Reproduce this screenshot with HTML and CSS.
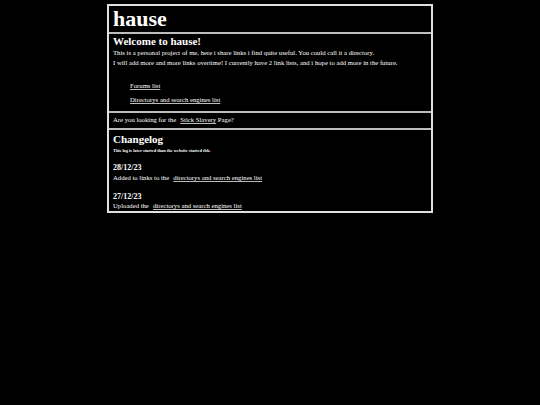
FILE: index.html
```html
<!DOCTYPE html>
<html>
<head>
<meta charset="utf-8">
<title>hause</title>
<link rel="stylesheet" href="styles.css">
</head>
<body>
<div class="page">
  <header class="box title-box">
    <h1 class="title">hause</h1>
  </header>
  <section class="box">
    <h2 class="heading">Welcome to hause!</h2>
    <p class="text">This is a personal project of me, here i share links i find quite useful. You could call it a directory.<br>I will add more and more links overtime! I currently have 2 link lists, and i hope to add more in the future.</p>
    <ul class="links">
      <li><a href="#">Forums list</a></li>
      <li><a href="#">Directorys and search engines list</a></li>
    </ul>
  </section>
  <section class="box ask">
    <p class="text">Are you looking for the <a class="gap" href="#">Stick Slavery</a> Page?</p>
  </section>
  <section class="box log">
    <h2 class="heading">Changelog</h2>
    <p class="tiny">This log is later started than the website started tbh.</p>
    <h3 class="date">28/12/23</h3>
    <p class="text">Added to links to the <a class="gap" href="#">directorys and search engines list</a></p>
    <h3 class="date second">27/12/23</h3>
    <p class="text">Uploaded the <a class="gap" href="#">directorys and search engines list</a></p>
  </section>
</div>
</body>
</html>
```

FILE: styles.css
```css
html, body {
  margin: 0;
  padding: 0;
  background: #000;
  color: #fff;
  font-family: "Liberation Serif", "Times New Roman", serif;
}
body {
  padding-top: 4px;
}
.page {
  width: 322px;
  margin: 0 auto;
  border: 2px solid #e0e0e0;
  display: flex;
  flex-direction: column;
}
.box {
  padding: 1px 4px 2px;
  border-top: 2px solid #bdbdbd;
}
.title-box {
  border-top: none;
  padding: 0 4px 1px;
}
.ask {
  padding: 2px 4px 3px;
}
.log {
  padding: 3px 4px 0;
}
.title {
  margin: 0;
  font-size: 22px;
  line-height: 25px;
  font-weight: bold;
}
.heading {
  margin: 0;
  font-size: 11px;
  line-height: 13px;
  font-weight: bold;
}
.text {
  margin: 0;
  font-size: 6.7px;
  line-height: 10px;
}
.links {
  list-style: none;
  margin: 13px 0 0;
  padding: 0 0 0 17px;
}
.links li {
  font-size: 6.7px;
  line-height: 10px;
  margin-bottom: 4px;
}
a {
  color: #fff;
  text-decoration: underline;
  text-decoration-thickness: 0.5px;
  text-decoration-color: #bbb;
}
.gap {
  margin-left: 2.5px;
}
.tiny {
  margin: 2px 0 9px;
  font-size: 4.4px;
  line-height: 6px;
  font-weight: bold;
}
.date {
  margin: 4px 0 0;
  font-size: 8px;
  line-height: 10px;
  font-weight: bold;
}
.date.second {
  margin-top: 10px;
  line-height: 8px;
}
```
